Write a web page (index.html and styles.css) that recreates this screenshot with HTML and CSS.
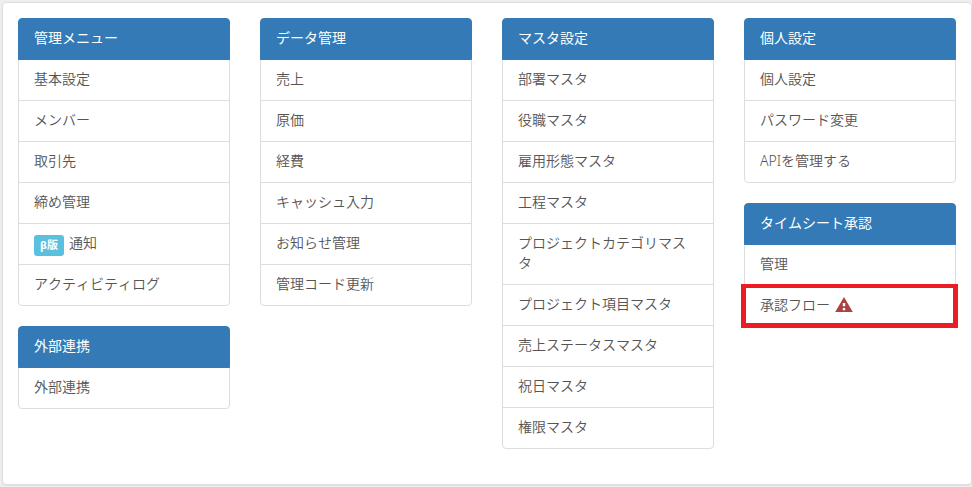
FILE: index.html
```html
<!DOCTYPE html>
<html lang="ja">
<head>
    <meta charset="UTF-8">
    <meta name="viewport" content="width=device-width, initial-scale=1.0">
    <title>管理メニュー</title>
    <link rel="stylesheet" href="styles.css">
</head>
<body>

    <main class="panel">
        <div class="column">
            <div class="list-group">
                <div class="list-item active">管理メニュー</div>
                <a class="list-item" href="#">基本設定</a>
                <a class="list-item" href="#">メンバー</a>
                <a class="list-item" href="#">取引先</a>
                <a class="list-item" href="#">締め管理</a>
                <a class="list-item" href="#"><span class="label">β版</span>通知</a>
                <a class="list-item" href="#">アクティビティログ</a>
            </div>
            <div class="list-group">
                <div class="list-item active">外部連携</div>
                <a class="list-item" href="#">外部連携</a>
            </div>
        </div>

        <div class="column">
            <div class="list-group">
                <div class="list-item active">データ管理</div>
                <a class="list-item" href="#">売上</a>
                <a class="list-item" href="#">原価</a>
                <a class="list-item" href="#">経費</a>
                <a class="list-item" href="#">キャッシュ入力</a>
                <a class="list-item" href="#">お知らせ管理</a>
                <a class="list-item" href="#">管理コード更新</a>
            </div>
        </div>

        <div class="column">
            <div class="list-group">
                <div class="list-item active">マスタ設定</div>
                <a class="list-item" href="#">部署マスタ</a>
                <a class="list-item" href="#">役職マスタ</a>
                <a class="list-item" href="#">雇用形態マスタ</a>
                <a class="list-item" href="#">工程マスタ</a>
                <a class="list-item" href="#">プロジェクトカテゴリマスタ</a>
                <a class="list-item" href="#">プロジェクト項目マスタ</a>
                <a class="list-item" href="#">売上ステータスマスタ</a>
                <a class="list-item" href="#">祝日マスタ</a>
                <a class="list-item" href="#">権限マスタ</a>
            </div>
        </div>

        <div class="column">
            <div class="list-group">
                <div class="list-item active">個人設定</div>
                <a class="list-item" href="#">個人設定</a>
                <a class="list-item" href="#">パスワード変更</a>
                <a class="list-item" href="#">APIを管理する</a>
            </div>
            <div class="list-group">
                <div class="list-item active">タイムシート承認</div>
                <a class="list-item" href="#">管理</a>
                <a class="list-item highlight" href="#">承認フロー<svg class="warning" viewBox="0 0 18 16" width="18" height="16"><path fill="#a94442" fill-rule="evenodd" d="M9 0L17.8 15H0.2zM7.8 6v3.2h2.4V6zM7.8 11v2.2h2.4V11z"/></svg></a>
            </div>
        </div>
    </main>

</body>
</html>
```

FILE: styles.css
```css
* {
    box-sizing: border-box;
}

body {
    margin: 0;
    padding: 2px 0 2px 2px;
    background-color: #eee;
    color: #555;
    font-family: "Noto Sans", "Noto Sans CJK JP", sans-serif;
    font-size: 14px;
    font-kerning: none;
    line-height: 20px;
}

.panel {
    display: flex;
    gap: 30px;
    width: 970px;
    height: 483px;
    padding: 15px;
    background-color: #fff;
    border: 1px solid #ddd;
    border-radius: 4px;
    box-shadow: 0 1px 1px rgba(0, 0, 0, 0.05);
}

.column {
    flex: 0 0 212px;
}

.list-group {
    margin-bottom: 20px;
}

.list-item {
    display: block;
    position: relative;
    margin-bottom: -1px;
    padding: 9px 15px 11px;
    background-color: #fff;
    border: 1px solid #ddd;
    color: #555;
    font-weight: 350;
    text-decoration: none;
    word-break: break-all;
}

.list-item:first-child {
    border-radius: 4px 4px 0 0;
}

.list-item:last-child {
    margin-bottom: 0;
    border-radius: 0 0 4px 4px;
}

.list-item.active {
    z-index: 2;
    background-color: #337ab7;
    border-color: #337ab7;
    color: #fff;
    font-weight: 400;
}

.label {
    float: left;
    height: 21px;
    margin: 2px 5px -2px 0;
    padding: 0 6px;
    background-color: #5bc0de;
    border-radius: 3px;
    color: #fff;
    font-size: 11px;
    font-weight: bold;
    line-height: 19px;
}

.warning {
    margin-left: 5px;
    vertical-align: -3px;
}

/* red frame around the item */
.highlight::after {
    content: "";
    position: absolute;
    top: -2px;
    right: -3px;
    bottom: -2px;
    left: -4px;
    border: 5px solid #ed1c24;
    border-top-width: 4px;
}
```
